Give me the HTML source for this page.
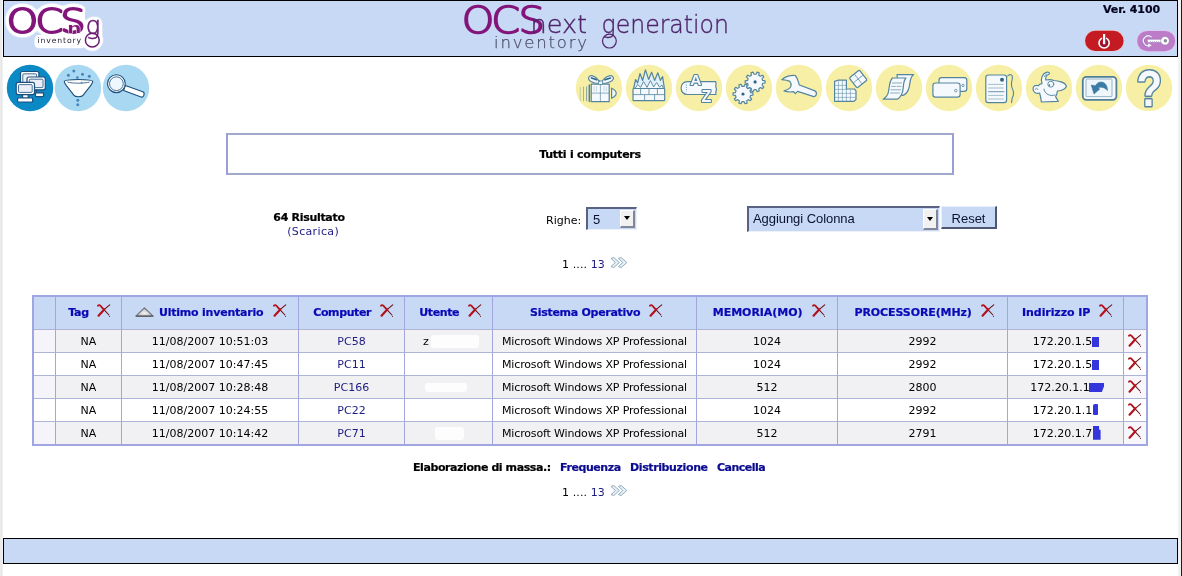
<!DOCTYPE html>
<html lang="it">
<head>
<meta charset="utf-8">
<title>OCS Inventory NG</title>
<style>
html,body{margin:0;padding:0;}
body{width:1182px;height:576px;position:relative;overflow:hidden;background:#fff;font-family:"DejaVu Sans","Liberation Sans",sans-serif;font-size:11px;color:#000;}
#page{position:absolute;left:0;top:0;width:1182px;height:576px;will-change:transform;}
.abs{position:absolute;}
b,th,#titlebox,#ver,.bd{-webkit-text-stroke:0.22px currentColor;}
svg{display:block;overflow:visible;}
#lstrip{left:0;top:0;width:2px;height:576px;background:#eaeaea;border-right:1px solid #f8f8f8;}
#lstrip2{left:2px;top:57px;width:1px;height:519px;background:#efefef;}
#rstrip{left:1178px;top:0;width:3px;height:576px;background:#f1f1f1;border-right:1px solid #1c1c1c;}
#hdr{left:3px;top:0;width:1173px;height:55px;border:1px solid #000;background:#c7d9f5;}
#ftr{left:3px;top:538px;width:1173px;height:24px;border:1px solid #000;background:#c7d9f5;}
#ver{left:1060px;top:3px;width:100px;text-align:right;font-weight:bold;font-size:11px;line-height:14px;color:#05051e;letter-spacing:-0.1px;}
a{color:#1c1c80;text-decoration:none;}
#titlebox{left:226px;top:133px;width:724px;height:38px;border:2px solid #a0a8cc;border-left-color:#9c9cd8;border-right-color:#9c9cd8;background:#fff;text-align:center;font-weight:bold;line-height:40px;letter-spacing:-0.24px;}
.c{text-align:center;white-space:nowrap;}
.ico{position:absolute;top:64px;width:48px;height:48px;}
table#t{position:absolute;left:32px;top:295px;border-collapse:separate;border-spacing:0;table-layout:fixed;width:1116px;border:2px solid #9fa6e2;}
#t td,#t th{border:0;border-left:1px solid #a2a6dc;border-top:1px solid #adb4d8;padding:0;text-align:center;white-space:nowrap;overflow:hidden;font-size:11px;position:relative;}
#t td:first-child,#t th:first-child{border-left:0;}
#t th{border-top:0;background:#c7d9f5;height:32px;line-height:32px;color:#0909b6;font-weight:bold;padding-left:4px;}
#t th.u{padding-left:0;}
#t td{height:20px;line-height:20px;padding-top:2px;}
#t tr.o td{background:#f1f1f4;}
#t tr.e td{background:#fff;}
#t tr td:last-child{background:#f7f7fb;}
#t tr.o td:first-child{background:#f4f4fa;}
#t tr.e td:last-child{background:#fff;}
.x{display:inline-block;width:13.5px;height:13.5px;vertical-align:baseline;margin-left:9.2px;position:relative;top:1.5px;}
.xr{display:block;position:absolute;left:3.5px;top:4px;width:13.5px;height:13.5px;}
.blk{position:absolute;background:#3535dc;}
.sp{display:inline-block;height:1px;}
.sm{position:absolute;background:#fdfdfd;border-radius:3px;}
.sel{position:absolute;box-sizing:border-box;background:#c7d9f5;border-top:2px solid #5a6283;border-left:2px solid #5a6283;border-right:1px solid #eef1f7;border-bottom:1px solid #eef1f7;font-family:"Liberation Sans",sans-serif;font-size:13px;color:#0a1230;white-space:nowrap;}
.sel select{-webkit-appearance:none;appearance:none;position:absolute;left:0;top:0;width:100%;height:100%;margin:0;padding:0;border:0;border-radius:0;outline:0;background:transparent;font-family:"Liberation Sans",sans-serif;font-size:13px;color:#0a1230;}
.sel .btn{position:absolute;right:1px;top:1px;bottom:1px;width:15px;box-sizing:border-box;background:#f1f1f1;border-right:2px solid #82869a;border-bottom:2px solid #82869a;border-top:1px solid #fff;border-left:1px solid #fff;}
.sel .btn i{position:absolute;left:3px;top:5px;width:0;height:0;border-left:3.5px solid transparent;border-right:3.5px solid transparent;border-top:4px solid #000;}
#reset{-webkit-appearance:none;appearance:none;margin:0;padding:0;border-radius:0;position:absolute;left:941px;top:206px;width:56px;height:23px;box-sizing:border-box;background:#c7d9f5;border-top:1px solid #e8eefa;border-left:1px solid #e8eefa;border-right:2px solid #4e5675;border-bottom:2px solid #4e5675;font-family:"Liberation Sans",sans-serif;font-size:13px;color:#0a1230;text-align:center;line-height:23px;}
.pg{position:absolute;white-space:nowrap;line-height:14px;letter-spacing:0.1px;}
.pg svg{display:inline-block;vertical-align:baseline;margin-left:4.7px;position:relative;top:0.3px;}
</style>
</head>
<body><div id="page">
<div id="lstrip" class="abs"></div><div id="lstrip2" class="abs"></div>
<div id="rstrip" class="abs"></div>
<div id="hdr" class="abs"></div>
<svg class="abs" style="left:4px;top:1px;width:110px;height:55px" viewBox="4 1 110 55">
<defs>
<filter id="hb" x="-20%" y="-20%" width="140%" height="140%"><feGaussianBlur stdDeviation="0.6"/></filter>
<filter id="halo" x="-10%" y="-20%" width="120%" height="140%" color-interpolation-filters="sRGB"><feGaussianBlur in="SourceAlpha" stdDeviation="2.8" result="db"/><feComponentTransfer in="db" result="dc"><feFuncA type="linear" slope="12" intercept="-0.36"/></feComponentTransfer><feFlood flood-color="#fff"/><feComposite in2="dc" operator="in" result="w"/><feMerge><feMergeNode in="w"/><feMergeNode in="SourceGraphic"/></feMerge></filter>
</defs>
<g filter="url(#hb)" fill="#fff" stroke="#fff" stroke-linejoin="round" stroke-linecap="round">
<rect x="36" y="36.4" width="48" height="10.4" rx="3" stroke-width="3"/>
<ellipse cx="22.5" cy="21.3" rx="13" ry="13" stroke-width="0"/><ellipse cx="50.5" cy="21.3" rx="12" ry="13" stroke-width="0"/><rect x="50" y="10" width="12" height="22" stroke-width="0"/><rect x="62" y="8" width="22" height="27" stroke-width="2"/><ellipse cx="92.3" cy="40.2" rx="10.6" ry="10.6" stroke-width="0"/>
</g>
<g filter="url(#halo)">
<g transform="scale(1.2,1)"><text x="5.59 29.68 50.18" y="33.4" font-family="'DejaVu Sans',sans-serif" font-weight="200" font-size="33.2" fill="#83157a" stroke="#83157a" stroke-width="2.1" vector-effect="non-scaling-stroke" stroke-linejoin="round">OCS</text></g>
<text x="85.8" y="33.6" font-family="'DejaVu Sans',sans-serif" font-weight="200" font-size="24" fill="#6b1a72" stroke="#6b1a72" stroke-width="0.6">g</text>
<circle cx="92.3" cy="40.2" r="6.9" fill="none" stroke="#6b1a72" stroke-width="1.5"/>
</g>
<text transform="translate(67.6,33.2) scale(1.45,1)" font-family="'Liberation Sans',sans-serif" font-weight="bold" font-size="15.4" fill="#83157a" stroke="#f6e6f4" stroke-width="0.8" paint-order="stroke">n</text>
<text x="37.6" y="43.3" font-family="'DejaVu Sans',sans-serif" font-size="7.7" letter-spacing="0.86" fill="#2c2236">inventory</text>
</svg>
<svg class="abs" style="left:455px;top:1px;width:285px;height:55px" viewBox="455 1 285 55">
<g transform="scale(1.12,1)"><text x="412.26 438.51 462.88" y="33.1" font-family="'DejaVu Sans',sans-serif" font-weight="200" font-size="37" fill="#83157a" stroke="#83157a" stroke-width="1.7" vector-effect="non-scaling-stroke" stroke-linejoin="round">OCS</text></g>
<text x="530.5" y="33" font-family="'DejaVu Sans',sans-serif" font-weight="200" font-size="24" textLength="56.5" lengthAdjust="spacingAndGlyphs" fill="#50256a" stroke="#50256a" stroke-width="0.35">next</text>
<text x="601.5" y="33" font-family="'DejaVu Sans',sans-serif" font-weight="200" font-size="24" textLength="127.5" lengthAdjust="spacingAndGlyphs" fill="#50256a" stroke="#50256a" stroke-width="0.35">generation</text>
<circle cx="609.4" cy="41.1" r="6.9" fill="none" stroke="#50256a" stroke-width="1.2"/>
<text x="494" y="47.8" font-family="'DejaVu Sans',sans-serif" font-weight="200" font-size="16.5" textLength="93" lengthAdjust="spacing" fill="#50506a" stroke="#50506a" stroke-width="0.25">inventory</text>
</svg>
<div id="ver" class="abs">Ver. 4100</div>
<svg class="abs" style="left:1083px;top:29px;width:43px;height:25px" viewBox="1083 29 43 25">
<rect x="1084.3" y="30" width="40" height="21.6" rx="10.8" fill="#f2c4cc" opacity="0.85"/>
<rect x="1085.1" y="30.7" width="38.5" height="20.3" rx="10.1" fill="#c41a22"/>
<circle cx="1104.1" cy="42.9" r="5.1" fill="#9a1430" stroke="#fff" stroke-width="1.6"/>
<rect x="1102.2" y="35.4" width="3.8" height="9" fill="#c41a22"/>
<rect x="1103" y="34" width="2.2" height="10.2" fill="#fff"/>
</svg>
<svg class="abs" style="left:1135px;top:29px;width:43px;height:25px" viewBox="1135 29 43 25">
<rect x="1136.4" y="30.2" width="39.6" height="21.6" rx="10.8" fill="#e4c8ec" opacity="0.85"/>
<rect x="1137.2" y="30.9" width="38" height="20.3" rx="10.1" fill="#bd7cc8"/>
<path d="M1151.6 37.2 A4.9 4.9 0 1 0 1150 45.4" fill="none" stroke="#8a62a8" stroke-width="2.4" opacity="0.6"/>
<path d="M1151.6 37.2 A4.9 4.9 0 1 0 1150 45.4" fill="none" stroke="#eef0fc" stroke-width="1.4"/>
<path d="M1148.2 47.4 L1151.8 45.2 L1148.2 43.2 Z" fill="#eef0fc"/>
<rect x="1147.4" y="39.3" width="14.6" height="3.2" rx="1" fill="#fff" stroke="#8a6aa4" stroke-width="0.5"/>
<path d="M1150 41.6 L1160 41.6" stroke="#b0a8c0" stroke-width="0.8" stroke-dasharray="1 1"/>
<circle cx="1165" cy="40.8" r="4.3" fill="#fff" stroke="#8a6aa4" stroke-width="0.5"/>
<circle cx="1165.4" cy="40.8" r="1.8" fill="#8c8c98"/>
</svg>
<svg class="ico" style="left:6px" viewBox="0 0 48 48"><circle cx="24" cy="24" r="23.2" fill="#0b89c5"/><g fill="#fff" stroke="#1d4f7e" stroke-width="1.2" stroke-linejoin="round">
<rect x="14.5" y="7.5" width="18.4" height="13.5" rx="2"/><rect x="16.8" y="9.8" width="13.8" height="9" rx="1" fill="#eceef6" stroke-width="0.8"/>
<rect x="21" y="13" width="18.3" height="12.8" rx="2"/><rect x="23.3" y="15.2" width="13.7" height="8.4" rx="1" fill="#eceef6" stroke-width="0.8"/>
<path d="M30.5 25.8 L30.5 28.6 L37.5 28.6 L37.5 32.4 L30 32.4 L30 29"/>
<rect x="29.5" y="28.8" width="8" height="3.8" rx="0.8"/>
<rect x="10.2" y="18.4" width="18.3" height="12.2" rx="2"/><rect x="12.5" y="20.6" width="13.7" height="7.8" rx="1" fill="#eceef6" stroke-width="0.8"/>
<rect x="16.6" y="30.6" width="5.6" height="3.4"/>
<rect x="11.6" y="34" width="15" height="4" rx="0.8"/>
</g></svg>
<svg class="ico" style="left:54px" viewBox="0 0 48 48"><circle cx="24" cy="24" r="23.2" fill="#a9d9f2"/><g fill="#fff" stroke="#1d4f7e" stroke-width="1.1" stroke-linejoin="round">
<path d="M10.3 17.6 C10.3 14.8 38.7 14.8 38.7 17.6 C38.7 19 37.5 20.4 36.8 21.4 L29 31.4 C27.6 33.2 21.4 33.2 20 31.4 L12.2 21.4 C11.5 20.4 10.3 19 10.3 17.6 Z"/>
<path d="M13.5 18 C18 19.6 31 19.6 35.5 18" fill="none" stroke-width="0.8"/>
</g>
<g fill="#4586bb"><circle cx="19.8" cy="6.9" r="1.5"/><circle cx="14.4" cy="11.3" r="1.5"/><circle cx="28.5" cy="10.2" r="1.5"/><circle cx="35.3" cy="12.3" r="1.5"/><circle cx="23.4" cy="13.6" r="1.3"/><circle cx="27.6" cy="18.6" r="0.9"/><circle cx="23.8" cy="36.2" r="1.5"/><circle cx="23.8" cy="40.7" r="1.5"/></g></svg>
<svg class="ico" style="left:102px" viewBox="0 0 48 48"><circle cx="24" cy="24" r="23.2" fill="#a9d9f2"/><g fill="#fff" stroke="#1d4f7e" stroke-width="1.1" stroke-linejoin="round">
<path d="M23.4 21.4 L40.8 27.8 C43.4 28.8 41.8 34 39 33 L21.6 26.6 Z"/>
<circle cx="14.4" cy="19.7" r="8.9"/><circle cx="14.4" cy="19.7" r="6.9" fill="#eef7fd" stroke-width="0.8"/>
</g></svg>
<svg class="ico" style="left:575px" viewBox="0 0 48 48"><circle cx="24" cy="24" r="23.2" fill="#f7efa5"/><g fill="#f5f9fd" stroke="#54859e" stroke-width="1.2" stroke-linejoin="round" stroke-linecap="round">
<path d="M5.3 23.4 L5.3 36.4" fill="none" stroke-width="0.9" opacity="0.35"/><path d="M8.5 23 L8.5 36.8" fill="none" stroke-width="1" opacity="0.55"/><path d="M11.6 22.8 L11.6 36.8" fill="none" stroke-width="1" opacity="0.7"/><path d="M14.3 21 L14.3 37.4" fill="none" stroke-width="1.5"/>
<rect x="16.2" y="20.2" width="18" height="17.5"/>
<path d="M25.4 20.4 L25.4 37.6 M16.4 29.1 L34 29.1" fill="none" stroke-width="0.8" opacity="0.8"/>
<path d="M19 23 L19 27 M21.4 22.6 L21.4 27.2 M29 22.6 L29 27 M31.4 23 L31.4 27" fill="none" stroke-width="0.6" opacity="0.5"/>
<path d="M25 19.4 C22.6 12.6 15.6 9.8 13.8 13.2 C12.4 16.6 18.6 20 25 19.4 Z"/>
<path d="M26.2 19.4 C28.6 12.6 36.4 9.8 38.2 13.2 C39.6 16.6 32.6 20 26.2 19.4 Z"/>
<path d="M16.6 14 L21.6 15.8 M35.4 14 L30 15.8" fill="none" stroke="#2f6486" stroke-width="1.7"/>
<rect x="23.6" y="17" width="4" height="3.6" rx="1" stroke-width="0.9"/>
<path d="M36.6 24.2 C39.6 25.6 41.2 27.6 41.2 29.2 C41.2 30.8 39.6 32.8 36.6 34.2 Z"/>
</g></svg>
<svg class="ico" style="left:625px" viewBox="0 0 48 48"><circle cx="24" cy="24" r="23.2" fill="#f7efa5"/><g fill="#f5f9fd" stroke="#54859e" stroke-width="1.2" stroke-linejoin="round">
<path d="M8.6 24.5 L10.6 15.5 L12.6 19 L15 9.5 L17.6 16.5 L20.4 5.8 L23.6 15.4 L26.6 8.2 L29.6 16.4 L32.8 8.8 L35.4 16.4 L37.6 12.6 L39.4 24.5 Z" fill="#dff0fa"/>
<path d="M10 24.5 L12.6 20.4 L15.6 23.4 L18.6 17.6 L22 23.4 L25.4 16.6 L28.6 23 L31.6 18.6 L34.6 23.2 L37 21 L38.4 24.5" fill="#f5f9fd" stroke-width="0.9"/>
<rect x="8" y="24.5" width="31.7" height="12.2" rx="0.8"/>
<path d="M8 30.6 L39.7 30.6 M15.6 24.5 L15.6 30.6 M24 24.5 L24 30.6 M32.4 24.5 L32.4 30.6 M19.6 30.6 L19.6 36.7 M29.6 30.6 L29.6 36.7" fill="none" stroke-width="0.8"/>
</g></svg>
<svg class="ico" style="left:675px" viewBox="0 0 48 48"><circle cx="24" cy="24" r="23.2" fill="#f7efa5"/><g fill="#f5f9fd" stroke="#54859e" stroke-width="1.2" stroke-linejoin="round">
<path d="M12.4 17.7 L40.6 17.7 C42.2 20 39.6 22 41.2 24 C42.2 26.2 39.8 28.4 41 30.5 L12.4 30.5 C4 30.5 4 17.7 12.4 17.7 Z"/>
<path d="M11.4 20.6 L11.4 27.6" fill="none" stroke-width="0.7" stroke-dasharray="1.2 1"/>
</g>
<text x="20.8" y="21.2" text-anchor="middle" font-family="'Liberation Sans',sans-serif" font-weight="bold" font-size="15.5" fill="#f5f9fd" stroke="#54859e" stroke-width="2.2" paint-order="stroke fill" stroke-linejoin="round">A</text>
<text x="31.4" y="38.2" text-anchor="middle" font-family="'Liberation Sans',sans-serif" font-weight="bold" font-size="16" fill="#f5f9fd" stroke="#54859e" stroke-width="2.2" paint-order="stroke fill" stroke-linejoin="round">Z</text></svg>
<svg class="ico" style="left:725px" viewBox="0 0 48 48"><circle cx="24" cy="24" r="23.2" fill="#f7efa5"/><path d="M25.56 28.56 L27.94 28.93 L27.94 31.07 L25.56 31.44 L24.97 33.28 L26.67 34.98 L25.42 36.71 L23.27 35.61 L21.71 36.75 L22.09 39.13 L20.06 39.79 L18.97 37.64 L17.03 37.64 L15.94 39.79 L13.91 39.13 L14.29 36.75 L12.73 35.61 L10.58 36.71 L9.33 34.98 L11.03 33.28 L10.44 31.44 L8.06 31.07 L8.06 28.93 L10.44 28.56 L11.03 26.72 L9.33 25.02 L10.58 23.29 L12.73 24.39 L14.29 23.25 L13.91 20.87 L15.94 20.21 L17.03 22.36 L18.97 22.36 L20.06 20.21 L22.09 20.87 L21.71 23.25 L23.27 24.39 L25.42 23.29 L26.67 25.02 L24.97 26.72 Z" fill="#f5f9fd" stroke="#54859e" stroke-width="1.2" stroke-linejoin="round"/><circle cx="18" cy="30" r="1.6" fill="#2f6486"/><path d="M37.66 16.46 L40.04 16.83 L40.04 18.97 L37.66 19.34 L37.07 21.18 L38.77 22.88 L37.52 24.61 L35.37 23.51 L33.81 24.65 L34.19 27.03 L32.16 27.69 L31.07 25.54 L29.13 25.54 L28.04 27.69 L26.01 27.03 L26.39 24.65 L24.83 23.51 L22.68 24.61 L21.43 22.88 L23.13 21.18 L22.54 19.34 L20.16 18.97 L20.16 16.83 L22.54 16.46 L23.13 14.62 L21.43 12.92 L22.68 11.19 L24.83 12.29 L26.39 11.15 L26.01 8.77 L28.04 8.11 L29.13 10.26 L31.07 10.26 L32.16 8.11 L34.19 8.77 L33.81 11.15 L35.37 12.29 L37.52 11.19 L38.77 12.92 L37.07 14.62 Z" fill="#f5f9fd" stroke="#54859e" stroke-width="1.2" stroke-linejoin="round"/><circle cx="30.1" cy="17.9" r="1.6" fill="#2f6486"/></svg>
<svg class="ico" style="left:775px" viewBox="0 0 48 48"><circle cx="24" cy="24" r="23.2" fill="#f7efa5"/><g fill="#f5f9fd" stroke="#54859e" stroke-width="1.2" stroke-linejoin="round">
<path d="M6.8 15.6 C10 12.5 16 10.8 20.3 11.5 C22.6 14 23.4 18 24.4 21 L39.4 26.6 C42.8 28 41.6 33.4 38 32.4 L22.6 27.4 L20.3 29.6 L18.6 27.6 C15 28.4 11.6 27.8 9 26.9 C12.6 25.8 15.2 24.4 15.8 22.4 C16.4 20.4 16 18.6 14.9 17.4 C12.6 16.2 9.6 15.8 6.8 15.6 Z"/>
</g></svg>
<svg class="ico" style="left:825px" viewBox="0 0 48 48"><circle cx="24" cy="24" r="23.2" fill="#f7efa5"/><g fill="#f5f9fd" stroke="#54859e" stroke-width="1.2" stroke-linejoin="round">
<path d="M9.6 17.4 L13 16.2 L21.4 16.2 L21.4 25 L29.4 25 L31 26.8 L31 35.4 L29 37.3 L9.6 37.3 Z"/>
<path d="M13.4 16.6 L13.4 37 M17.4 16.6 L17.4 37 M21.4 25 L21.4 37 M25.4 25.4 L25.4 37 M9.8 21.4 L21.2 21.4 M9.8 25.4 L21.2 25.4 M9.8 29.4 L30.8 29.4 M9.8 33.4 L30.8 33.4" fill="none" stroke-width="0.6" opacity="0.85"/>
<g transform="translate(33.2,15) rotate(-38)"><rect x="-6.4" y="-6.4" width="12.8" height="12.8" rx="1.2"/><path d="M0 -6 L0 6 M-6 0 L6 0" fill="none" stroke-width="0.7"/></g>
</g></svg>
<svg class="ico" style="left:875px" viewBox="0 0 48 48"><circle cx="24" cy="24" r="23.2" fill="#f7efa5"/><g fill="#f5f9fd" stroke="#54859e" stroke-width="1.2" stroke-linejoin="round" stroke-linecap="round">
<path d="M22 10.6 L38.6 10.6 C34 14 35.6 20 33.6 25 C32.6 28 30 30.6 28 31.4 L24 31 Z"/>
<path d="M17.4 14 L31 14 C27 18 29.6 24.6 26.6 30.6 C25.4 33 24 34.4 22.4 35.2 L8.2 35.2 C11 33.6 12.2 32 13 29.6 C14.6 24.6 13.6 18.4 17.4 14 Z"/>
<path d="M17.4 19 L26.6 19 M16.6 22.4 L20.4 22.4 M22 22.4 L26 22.4 M16 25.8 L25.6 25.8 M15.6 29 L24.4 29" fill="none" stroke-width="0.8" stroke-dasharray="2 0.8" opacity="0.85"/>
</g></svg>
<svg class="ico" style="left:925px" viewBox="0 0 48 48"><circle cx="24" cy="24" r="23.2" fill="#f7efa5"/><g fill="#f5f9fd" stroke="#54859e" stroke-width="1.2" stroke-linejoin="round">
<rect x="14" y="13.6" width="27.8" height="13.8" rx="2.6"/>
<circle cx="38" cy="21.4" r="1.2" fill="none" stroke-width="0.8"/>
<rect x="7.9" y="19" width="27.2" height="14.2" rx="2.6"/>
<circle cx="30.8" cy="26.6" r="1.3" fill="none" stroke-width="0.8"/>
</g></svg>
<svg class="ico" style="left:975px" viewBox="0 0 48 48"><circle cx="24" cy="24" r="23.2" fill="#f7efa5"/><g fill="#f5f9fd" stroke="#54859e" stroke-width="1.2" stroke-linejoin="round" stroke-linecap="round">
<rect x="10.8" y="11" width="20.8" height="27.6" rx="2.6"/>
<circle cx="27" cy="15.8" r="2" fill="#2f6486" stroke="none"/>
<path d="M13.6 20.4 L28.8 20.4 M13.6 24 L28.8 24 M13.6 31.4 L28.8 31.4 M13.6 35 L28.8 35" fill="none" stroke-width="0.7" stroke-dasharray="1.6 1" opacity="0.8"/>
<path d="M13.6 27.6 L28.8 27.6" fill="none" stroke-width="1.2" opacity="0.7"/>
<path d="M32.6 12 C34.6 9.6 37.6 10.4 37.4 13.4 C37.2 17 35.4 20 37 23.6 C38.6 27 39.6 29.6 37.6 33 C36.6 35 36.8 37 36.6 38.8" fill="none" stroke-width="1.1"/>
</g></svg>
<svg class="ico" style="left:1025px" viewBox="0 0 48 48"><circle cx="24" cy="24" r="23.2" fill="#f7efa5"/><g fill="#f5f9fd" stroke="#54859e" stroke-width="1.2" stroke-linejoin="round" stroke-linecap="round">
<path d="M17 19.6 C15 15 17.6 9.4 21.4 8.4 C23.6 7.8 25.4 9 23.8 10.2 C21.6 11 20.4 13.4 20.8 16 C24 15.4 27 15.6 28.8 16.5 C33 16.6 40 18.4 41.2 21.6 C42 24.4 37 26.6 32.4 27 C32 30 31.4 31.6 30.6 32.6 L33.3 37.4 L16.4 38 C16 35 15.4 31.6 14.6 29 C11.6 30.2 8 28.4 8 25 C8 22 10.8 20.6 13.4 21.8 C14 20.6 15.4 19.8 17 19.6 Z"/>
<circle cx="25.8" cy="20.2" r="3" stroke-width="0.9"/>
<circle cx="24.4" cy="21.2" r="0.9" fill="#54859e" stroke="none"/>
<path d="M18.9 25.1 C20 30.4 25.4 32.6 29.9 31" fill="none" stroke-width="1"/>
<path d="M10.4 25.4 C10.8 23.8 12.4 23.8 12.8 25.6" fill="none" stroke-width="0.9"/>
<path d="M19.4 12.6 C19.8 11.4 20.6 10.6 21.6 10.2" fill="none" stroke-width="0.8"/>
</g></svg>
<svg class="ico" style="left:1075px" viewBox="0 0 48 48"><circle cx="24" cy="24" r="23.2" fill="#f7efa5"/><g fill="#f5f9fd" stroke="#4f7f96" stroke-width="1.8" stroke-linejoin="round">
<rect x="7.8" y="12.8" width="33.6" height="23" rx="3.6"/>
<rect x="11" y="15" width="26" height="17.6" rx="0.6" fill="#eef5fb" stroke="#7fa3b6" stroke-width="0.8"/>
</g>
<path d="M16.2 21 L19 30 L24.8 25.1 L22.8 23.8 C25.4 22.6 29.4 23 32.5 26.6 C32.6 21.4 29.6 18 26.2 18 C23.6 18 21.6 19.4 20.4 21.8 Z" fill="#3a7ca6" stroke="#34709a" stroke-width="0.5" stroke-linejoin="round"/></svg>
<svg class="ico" style="left:1125px" viewBox="0 0 48 48"><circle cx="24" cy="24" r="23.2" fill="#f7efa5"/><text transform="translate(24.4,42) scale(0.84,1)" text-anchor="middle" font-family="'Liberation Sans',sans-serif" font-weight="bold" font-size="50" fill="#f5f9fd" stroke="#54859e" stroke-width="3.2" paint-order="stroke fill" stroke-linejoin="round">?</text></svg>
<div id="titlebox" class="abs">Tutti i computers</div>

<div class="abs c" style="left:209px;top:211px;width:200px;line-height:14px;"><b style="letter-spacing:-0.3px">64 Risultato</b><br><a style="margin-left:8.2px;letter-spacing:0.35px">(Scarica)</a></div>
<div class="abs" style="left:546px;top:214px;line-height:14px;">Righe:</div>
<div class="sel" style="left:586px;top:207px;width:51px;height:23px;"><select name="pcparpage" style="padding-left:5px;padding-top:1px"><option>5</option></select><span class="btn"><i></i></span></div>
<div class="sel" style="left:747px;top:206px;width:193px;height:26px;"><select name="newcol" style="padding-left:4px;padding-bottom:2px;letter-spacing:-0.06px"><option>Aggiungi Colonna</option></select><span class="btn"><i style="top:7px"></i></span></div>
<button id="reset" type="button">Reset</button>

<div class="pg" style="left:562px;top:257px;">1 .... <a>13</a><svg width="18" height="11" viewBox="0 0 18 11"><path d="M1 1.4 L3.8 0.5 L9.4 5.5 L3.8 10.5 L1 9.6 L5.4 5.5 Z" fill="#e2f0f9" stroke="#8da4b4" stroke-width="0.9" stroke-linejoin="round"/><path d="M8.4 1.4 L11.2 0.5 L16.9 5.5 L11.2 10.5 L8.4 9.6 L12.8 5.5 Z" fill="#e2f0f9" stroke="#8da4b4" stroke-width="0.9" stroke-linejoin="round"/></svg></div>
<table id="t">
<colgroup><col style="width:21px"><col style="width:66px"><col style="width:177px"><col style="width:106px"><col style="width:88px"><col style="width:204px"><col style="width:141px"><col style="width:170px"><col style="width:116px"><col style="width:23px"></colgroup>
<tr><th></th><th style="padding-left:1.9px"><span style="letter-spacing:-0.2px">Tag</span><svg class="x" style="margin-left:8.2px" viewBox="0 0 14 14"><path d="M1 1.9 C1.6 1 2.6 0.9 3.4 1.7 L7.2 5.9" fill="none" stroke="#b3131f" stroke-width="1.9" stroke-linecap="round"/><path d="M7.2 5.9 L12.4 11.4" fill="none" stroke="#6e0c12" stroke-width="1.1" stroke-linecap="round"/><path d="M13.2 0.9 L7.6 5.6" fill="none" stroke="#6e0c12" stroke-width="1.1" stroke-linecap="round"/><path d="M7.5 5.7 L1.6 12.1" fill="none" stroke="#b3131f" stroke-width="2.3" stroke-linecap="round"/><circle cx="13" cy="13" r="0.55" fill="#6e0c12"/></svg></th><th class="u"><svg style="display:inline-block;width:19px;height:10px;vertical-align:baseline;margin-right:6px;position:relative;top:1px;left:1px" viewBox="0 0 19 10"><defs><radialGradient id="tg" cx="0.5" cy="0.62" r="0.5"><stop offset="0" stop-color="#f4f4f2"/><stop offset="1" stop-color="#b9bcc2"/></radialGradient></defs><path d="M0.9 9.1 L9.4 0.9 L18.1 9.1 Z" fill="url(#tg)" stroke="#6c7078" stroke-width="1.1" stroke-linejoin="round"/><path d="M0.8 9.2 L18.2 9.2" stroke="#5e6268" stroke-width="1.4"/></svg><span style="letter-spacing:-0.22px">Ultimo inventario</span><svg class="x" viewBox="0 0 14 14"><path d="M1 1.9 C1.6 1 2.6 0.9 3.4 1.7 L7.2 5.9" fill="none" stroke="#b3131f" stroke-width="1.9" stroke-linecap="round"/><path d="M7.2 5.9 L12.4 11.4" fill="none" stroke="#6e0c12" stroke-width="1.1" stroke-linecap="round"/><path d="M13.2 0.9 L7.6 5.6" fill="none" stroke="#6e0c12" stroke-width="1.1" stroke-linecap="round"/><path d="M7.5 5.7 L1.6 12.1" fill="none" stroke="#b3131f" stroke-width="2.3" stroke-linecap="round"/><circle cx="13" cy="13" r="0.55" fill="#6e0c12"/></svg></th><th><span style="letter-spacing:-0.4px">Computer</span><svg class="x" viewBox="0 0 14 14"><path d="M1 1.9 C1.6 1 2.6 0.9 3.4 1.7 L7.2 5.9" fill="none" stroke="#b3131f" stroke-width="1.9" stroke-linecap="round"/><path d="M7.2 5.9 L12.4 11.4" fill="none" stroke="#6e0c12" stroke-width="1.1" stroke-linecap="round"/><path d="M13.2 0.9 L7.6 5.6" fill="none" stroke="#6e0c12" stroke-width="1.1" stroke-linecap="round"/><path d="M7.5 5.7 L1.6 12.1" fill="none" stroke="#b3131f" stroke-width="2.3" stroke-linecap="round"/><circle cx="13" cy="13" r="0.55" fill="#6e0c12"/></svg></th><th><span style="letter-spacing:-0.4px">Utente</span><svg class="x" viewBox="0 0 14 14"><path d="M1 1.9 C1.6 1 2.6 0.9 3.4 1.7 L7.2 5.9" fill="none" stroke="#b3131f" stroke-width="1.9" stroke-linecap="round"/><path d="M7.2 5.9 L12.4 11.4" fill="none" stroke="#6e0c12" stroke-width="1.1" stroke-linecap="round"/><path d="M13.2 0.9 L7.6 5.6" fill="none" stroke="#6e0c12" stroke-width="1.1" stroke-linecap="round"/><path d="M7.5 5.7 L1.6 12.1" fill="none" stroke="#b3131f" stroke-width="2.3" stroke-linecap="round"/><circle cx="13" cy="13" r="0.55" fill="#6e0c12"/></svg></th><th><span style="letter-spacing:-0.28px">Sistema Operativo</span><svg class="x" viewBox="0 0 14 14"><path d="M1 1.9 C1.6 1 2.6 0.9 3.4 1.7 L7.2 5.9" fill="none" stroke="#b3131f" stroke-width="1.9" stroke-linecap="round"/><path d="M7.2 5.9 L12.4 11.4" fill="none" stroke="#6e0c12" stroke-width="1.1" stroke-linecap="round"/><path d="M13.2 0.9 L7.6 5.6" fill="none" stroke="#6e0c12" stroke-width="1.1" stroke-linecap="round"/><path d="M7.5 5.7 L1.6 12.1" fill="none" stroke="#b3131f" stroke-width="2.3" stroke-linecap="round"/><circle cx="13" cy="13" r="0.55" fill="#6e0c12"/></svg></th><th><span style="letter-spacing:-0.05px">MEMORIA(MO)</span><svg class="x" viewBox="0 0 14 14"><path d="M1 1.9 C1.6 1 2.6 0.9 3.4 1.7 L7.2 5.9" fill="none" stroke="#b3131f" stroke-width="1.9" stroke-linecap="round"/><path d="M7.2 5.9 L12.4 11.4" fill="none" stroke="#6e0c12" stroke-width="1.1" stroke-linecap="round"/><path d="M13.2 0.9 L7.6 5.6" fill="none" stroke="#6e0c12" stroke-width="1.1" stroke-linecap="round"/><path d="M7.5 5.7 L1.6 12.1" fill="none" stroke="#b3131f" stroke-width="2.3" stroke-linecap="round"/><circle cx="13" cy="13" r="0.55" fill="#6e0c12"/></svg></th><th><span style="letter-spacing:-0.1px">PROCESSORE(MHz)</span><svg class="x" viewBox="0 0 14 14"><path d="M1 1.9 C1.6 1 2.6 0.9 3.4 1.7 L7.2 5.9" fill="none" stroke="#b3131f" stroke-width="1.9" stroke-linecap="round"/><path d="M7.2 5.9 L12.4 11.4" fill="none" stroke="#6e0c12" stroke-width="1.1" stroke-linecap="round"/><path d="M13.2 0.9 L7.6 5.6" fill="none" stroke="#6e0c12" stroke-width="1.1" stroke-linecap="round"/><path d="M7.5 5.7 L1.6 12.1" fill="none" stroke="#b3131f" stroke-width="2.3" stroke-linecap="round"/><circle cx="13" cy="13" r="0.55" fill="#6e0c12"/></svg></th><th><span style="letter-spacing:-0.08px">Indirizzo IP</span><svg class="x" viewBox="0 0 14 14"><path d="M1 1.9 C1.6 1 2.6 0.9 3.4 1.7 L7.2 5.9" fill="none" stroke="#b3131f" stroke-width="1.9" stroke-linecap="round"/><path d="M7.2 5.9 L12.4 11.4" fill="none" stroke="#6e0c12" stroke-width="1.1" stroke-linecap="round"/><path d="M13.2 0.9 L7.6 5.6" fill="none" stroke="#6e0c12" stroke-width="1.1" stroke-linecap="round"/><path d="M7.5 5.7 L1.6 12.1" fill="none" stroke="#b3131f" stroke-width="2.3" stroke-linecap="round"/><circle cx="13" cy="13" r="0.55" fill="#6e0c12"/></svg></th><th></th></tr>
<tr class="o"><td></td><td>NA</td><td>11/08/2007 10:51:03</td><td><a>PC58</a></td><td style="text-align:left;padding-left:18px">z</td><td><span style="letter-spacing:-0.15px">Microsoft Windows XP Professional</span></td><td>1024</td><td>2992</td><td>172.20.1.5<span class="sp" style="width:6px"></span><i class="blk" style="left:84px;top:7.2px;width:7.2px;height:10.3px"></i></td><td><svg class="xr" viewBox="0 0 14 14"><path d="M1 1.9 C1.6 1 2.6 0.9 3.4 1.7 L7.2 5.9" fill="none" stroke="#b3131f" stroke-width="1.9" stroke-linecap="round"/><path d="M7.2 5.9 L12.4 11.4" fill="none" stroke="#6e0c12" stroke-width="1.1" stroke-linecap="round"/><path d="M13.2 0.9 L7.6 5.6" fill="none" stroke="#6e0c12" stroke-width="1.1" stroke-linecap="round"/><path d="M7.5 5.7 L1.6 12.1" fill="none" stroke="#b3131f" stroke-width="2.3" stroke-linecap="round"/><circle cx="13" cy="13" r="0.55" fill="#6e0c12"/></svg></td></tr>
<tr class="e"><td></td><td>NA</td><td>11/08/2007 10:47:45</td><td><a>PC11</a></td><td></td><td><span style="letter-spacing:-0.15px">Microsoft Windows XP Professional</span></td><td>1024</td><td>2992</td><td>172.20.1.5<span class="sp" style="width:6px"></span><i class="blk" style="left:84px;top:7.2px;width:7.2px;height:10.3px"></i></td><td><svg class="xr" viewBox="0 0 14 14"><path d="M1 1.9 C1.6 1 2.6 0.9 3.4 1.7 L7.2 5.9" fill="none" stroke="#b3131f" stroke-width="1.9" stroke-linecap="round"/><path d="M7.2 5.9 L12.4 11.4" fill="none" stroke="#6e0c12" stroke-width="1.1" stroke-linecap="round"/><path d="M13.2 0.9 L7.6 5.6" fill="none" stroke="#6e0c12" stroke-width="1.1" stroke-linecap="round"/><path d="M7.5 5.7 L1.6 12.1" fill="none" stroke="#b3131f" stroke-width="2.3" stroke-linecap="round"/><circle cx="13" cy="13" r="0.55" fill="#6e0c12"/></svg></td></tr>
<tr class="o"><td></td><td>NA</td><td>11/08/2007 10:28:48</td><td><a>PC166</a></td><td></td><td><span style="letter-spacing:-0.15px">Microsoft Windows XP Professional</span></td><td>512</td><td>2800</td><td>172.20.1.1<span class="sp" style="width:11px"></span><i class="blk" style="left:81px;top:7px;width:15px;height:9px;clip-path:polygon(0 0,100% 0,100% 35%,86% 100%,0 100%)"></i></td><td><svg class="xr" viewBox="0 0 14 14"><path d="M1 1.9 C1.6 1 2.6 0.9 3.4 1.7 L7.2 5.9" fill="none" stroke="#b3131f" stroke-width="1.9" stroke-linecap="round"/><path d="M7.2 5.9 L12.4 11.4" fill="none" stroke="#6e0c12" stroke-width="1.1" stroke-linecap="round"/><path d="M13.2 0.9 L7.6 5.6" fill="none" stroke="#6e0c12" stroke-width="1.1" stroke-linecap="round"/><path d="M7.5 5.7 L1.6 12.1" fill="none" stroke="#b3131f" stroke-width="2.3" stroke-linecap="round"/><circle cx="13" cy="13" r="0.55" fill="#6e0c12"/></svg></td></tr>
<tr class="e"><td></td><td>NA</td><td>11/08/2007 10:24:55</td><td><a>PC22</a></td><td></td><td><span style="letter-spacing:-0.15px">Microsoft Windows XP Professional</span></td><td>1024</td><td>2992</td><td>172.20.1.1<span class="sp" style="width:6px"></span><i class="blk" style="left:84.6px;top:4.9px;width:5.6px;height:11.1px;border-radius:2px 1px 1px 1px"></i></td><td><svg class="xr" viewBox="0 0 14 14"><path d="M1 1.9 C1.6 1 2.6 0.9 3.4 1.7 L7.2 5.9" fill="none" stroke="#b3131f" stroke-width="1.9" stroke-linecap="round"/><path d="M7.2 5.9 L12.4 11.4" fill="none" stroke="#6e0c12" stroke-width="1.1" stroke-linecap="round"/><path d="M13.2 0.9 L7.6 5.6" fill="none" stroke="#6e0c12" stroke-width="1.1" stroke-linecap="round"/><path d="M7.5 5.7 L1.6 12.1" fill="none" stroke="#b3131f" stroke-width="2.3" stroke-linecap="round"/><circle cx="13" cy="13" r="0.55" fill="#6e0c12"/></svg></td></tr>
<tr class="o"><td></td><td>NA</td><td>11/08/2007 10:14:42</td><td><a>PC71</a></td><td></td><td><span style="letter-spacing:-0.15px">Microsoft Windows XP Professional</span></td><td>512</td><td>2791</td><td>172.20.1.7<span class="sp" style="width:6px"></span><i class="blk" style="left:85px;top:4px;width:7.6px;height:13.7px;clip-path:polygon(0 0,80% 0,80% 25%,100% 30%,100% 100%,0 100%)"></i></td><td><svg class="xr" viewBox="0 0 14 14"><path d="M1 1.9 C1.6 1 2.6 0.9 3.4 1.7 L7.2 5.9" fill="none" stroke="#b3131f" stroke-width="1.9" stroke-linecap="round"/><path d="M7.2 5.9 L12.4 11.4" fill="none" stroke="#6e0c12" stroke-width="1.1" stroke-linecap="round"/><path d="M13.2 0.9 L7.6 5.6" fill="none" stroke="#6e0c12" stroke-width="1.1" stroke-linecap="round"/><path d="M7.5 5.7 L1.6 12.1" fill="none" stroke="#b3131f" stroke-width="2.3" stroke-linecap="round"/><circle cx="13" cy="13" r="0.55" fill="#6e0c12"/></svg></td></tr>
</table>

<div class="sm" style="left:431px;top:335px;width:48px;height:13px;"></div>
<div class="sm" style="left:425px;top:383px;width:42px;height:9px;"></div>
<div class="sm" style="left:435px;top:427px;width:29px;height:13px;"></div>

<div class="abs" style="left:413px;top:461px;line-height:14px;font-weight:bold;white-space:nowrap;-webkit-text-stroke:0.22px #000;"><span style="letter-spacing:-0.42px">Elaborazione di massa.:</span></div>
<a class="abs" style="left:560px;top:461px;line-height:14px;font-weight:bold;color:#0c0c90;-webkit-text-stroke:0.22px #0c0c90;letter-spacing:-0.42px">Frequenza</a>
<a class="abs" style="left:630px;top:461px;line-height:14px;font-weight:bold;color:#0c0c90;-webkit-text-stroke:0.22px #0c0c90;letter-spacing:-0.38px">Distribuzione</a>
<a class="abs" style="left:717px;top:461px;line-height:14px;font-weight:bold;color:#0c0c90;-webkit-text-stroke:0.22px #0c0c90;letter-spacing:-0.5px">Cancella</a>
<div class="pg" style="left:562px;top:485px;">1 .... <a>13</a><svg width="18" height="11" viewBox="0 0 18 11"><path d="M1 1.4 L3.8 0.5 L9.4 5.5 L3.8 10.5 L1 9.6 L5.4 5.5 Z" fill="#e2f0f9" stroke="#8da4b4" stroke-width="0.9" stroke-linejoin="round"/><path d="M8.4 1.4 L11.2 0.5 L16.9 5.5 L11.2 10.5 L8.4 9.6 L12.8 5.5 Z" fill="#e2f0f9" stroke="#8da4b4" stroke-width="0.9" stroke-linejoin="round"/></svg></div>

<div id="ftr" class="abs"></div>
</div></body>
</html>
